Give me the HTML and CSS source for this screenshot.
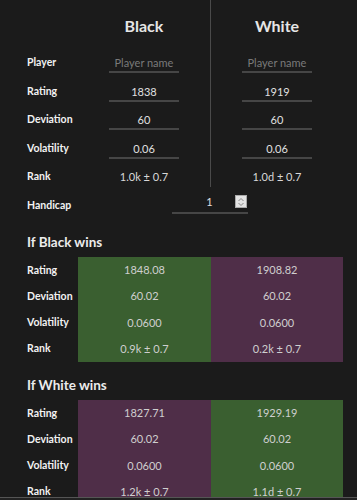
FILE: index.html
```html
<!DOCTYPE html>
<html lang="en">
<head>
  <meta charset="UTF-8">
  <meta name="viewport" content="width=device-width, initial-scale=1.0">
  <title>Glicko Calculator</title>
  <link rel="stylesheet" href="styles.css">
</head>
<body>
  <div class="calc">
    <div class="players">
      <div class="label"></div>
      <div class="head">Black</div>
      <div class="head right">White</div>

      <div class="label">Player</div>
      <div class="cell"><input type="text" placeholder="Player name"></div>
      <div class="cell right"><input type="text" placeholder="Player name"></div>

      <div class="label">Rating</div>
      <div class="cell"><input type="text" value="1838"></div>
      <div class="cell right"><input type="text" value="1919"></div>

      <div class="label">Deviation</div>
      <div class="cell"><input type="text" value="60"></div>
      <div class="cell right"><input type="text" value="60"></div>

      <div class="label">Volatility</div>
      <div class="cell"><input type="text" value="0.06"></div>
      <div class="cell right"><input type="text" value="0.06"></div>

      <div class="label">Rank</div>
      <div class="cell">1.0k ± 0.7</div>
      <div class="cell right last">1.0d ± 0.7</div>
    </div>

    <div class="handicap">
      <div class="label">Handicap</div>
      <div class="hc-field">
        <span class="hc-value">1</span>
        <span class="spinner">
          <svg width="8" height="10" viewBox="0 0 8 10"><path d="M1.5 4 L4 1.5 L6.5 4 M1.5 6 L4 8.5 L6.5 6" fill="none" stroke="#888" stroke-width="1"/></svg>
        </span>
      </div>
    </div>

    <h3>If Black wins</h3>
    <div class="result">
      <div class="label">Rating</div><div class="win">1848.08</div><div class="loss">1908.82</div>
      <div class="label">Deviation</div><div class="win">60.02</div><div class="loss">60.02</div>
      <div class="label">Volatility</div><div class="win">0.0600</div><div class="loss">0.0600</div>
      <div class="label">Rank</div><div class="win">0.9k ± 0.7</div><div class="loss">0.2k ± 0.7</div>
    </div>

    <h3>If White wins</h3>
    <div class="result">
      <div class="label">Rating</div><div class="loss">1827.71</div><div class="win">1929.19</div>
      <div class="label">Deviation</div><div class="loss">60.02</div><div class="win">60.02</div>
      <div class="label">Volatility</div><div class="loss">0.0600</div><div class="win">0.0600</div>
      <div class="label">Rank</div><div class="loss">1.2k ± 0.7</div><div class="win">1.1d ± 0.7</div>
    </div>
  </div>
  <div class="scrollbar"></div>
</body>
</html>
```

FILE: styles.css
```css
body {
  font-family: Lato, "Open Sans", sans-serif;
  background-color: #1b1b1b;
  color: #dcdcdc;
  margin: 0;
}
.calc {
  padding: 0 14px 0 27px;
}
.players {
  display: grid;
  grid-template-columns: 51px 132px 133px;
  grid-template-rows: 48px repeat(5, 28.5px);
}
.label {
  display: flex;
  align-items: center;
  font-size: 10.5px;
  font-weight: 700;
  color: #f2f2f2;
}
.head {
  font-size: 16px;
  font-weight: 700;
  color: #e6e6e6;
  text-align: center;
  padding-top: 16px;
  line-height: 20px;
}
.right {
  border-left: 1px solid #4a4a4a;
}
.last {
  align-self: start;
  height: 25px;
  padding-top: 3px;
  box-sizing: border-box;
}
.cell {
  display: flex;
  align-items: center;
  justify-content: center;
  font-size: 11px;
  color: #d8d8d8;
}
input {
  width: 70px;
  box-sizing: border-box;
  background: transparent;
  border: none;
  border-bottom: 2px solid #464646;
  color: #e0e0e0;
  font-family: inherit;
  font-size: 11px;
  text-align: center;
  padding: 1px 0 2px;
  margin-top: 4px;
  outline: none;
}
input::placeholder {
  color: #7a7a7a;
}
.handicap {
  display: grid;
  grid-template-columns: 145px 76px;
  height: 28px;
}
.hc-field {
  display: flex;
  align-items: center;
  border-bottom: 2px solid #464646;
  height: 20px;
  margin-top: 1px;
}
.hc-value {
  flex: 1;
  text-align: center;
  font-size: 11px;
  color: #e0e0e0;
  padding-left: 12px;
}
.spinner {
  width: 12px;
  height: 13px;
  margin-right: 1px;
  background: #e4e4e4;
  border: 1px solid #aaa;
  box-sizing: border-box;
  display: flex;
  align-items: center;
  justify-content: center;
}
h3 {
  font-size: 13.5px;
  font-weight: 700;
  color: #ececec;
  margin: 0;
  padding: 15px 0 6px;
  line-height: 17px;
}
.result {
  display: grid;
  grid-template-columns: 51px 133px 132px;
  grid-template-rows: repeat(4, 26.25px);
}
.win, .loss {
  display: flex;
  align-items: center;
  justify-content: center;
  font-size: 11px;
  color: #cfcfcf;
}
.win {
  background-color: #3a5f30;
}
.loss {
  background-color: #4f2e48;
}
.scrollbar {
  position: fixed;
  left: 0;
  right: 0;
  bottom: 0;
  height: 2px;
  background: #222;
  border-top: 1px solid #555;
}
```
